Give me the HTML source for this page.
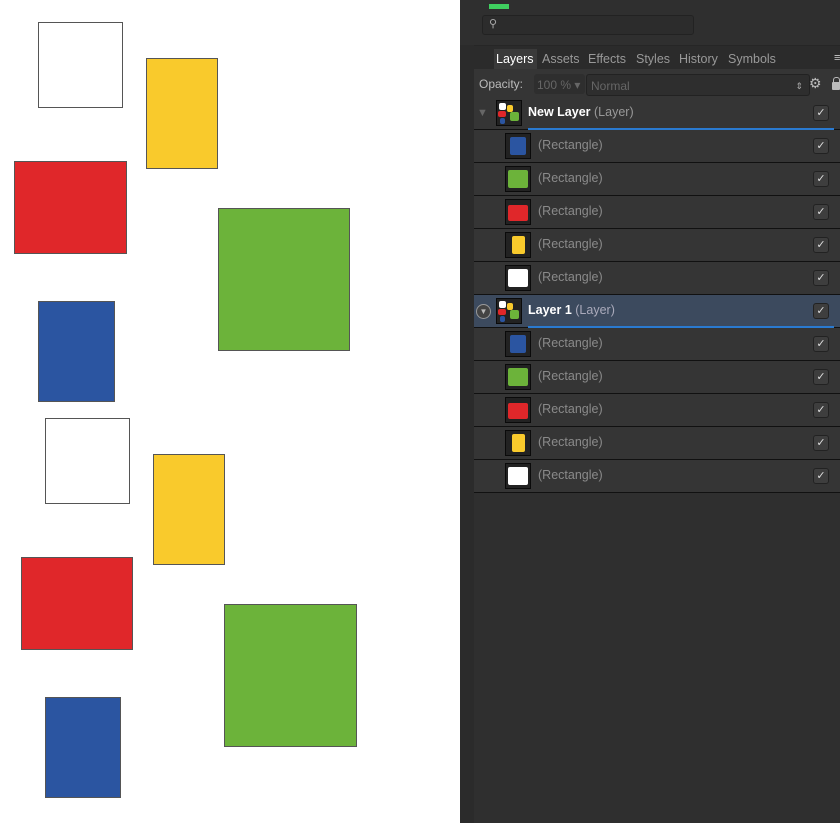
<!DOCTYPE html><html><head><style>
body{margin:0;width:840px;height:823px;background:#fff;position:relative;overflow:hidden;font-family:"Liberation Sans",sans-serif}
.s{position:absolute;box-sizing:border-box;border:1px solid #555}
.p{position:absolute;left:460px;top:0;width:380px;height:823px;background:#2f2f2f}
.row{position:absolute;left:474px;width:366px;height:32px;background:#353535;border-bottom:1px solid #111}
.th{position:absolute;top:3px;width:26px;height:26px;background:#222;box-sizing:border-box;border:1px solid #0a0a0a}
.th i{position:absolute;left:4px;top:3px;width:16px;height:18px;border-radius:2px}
.t{position:absolute;left:64px;top:8px;font-size:12.5px;color:#8a8a8a}
.cb{position:absolute;left:339px;top:8px;width:14px;height:14px;background:#3e3e3e;border:1px solid #222;border-radius:3px;color:#ddd;font-size:11px;line-height:14px;text-align:center}
.L{font-size:12.5px;color:#fff;font-weight:bold;position:absolute;left:54px;top:8px}
.L span{font-weight:normal;color:#999}
.tab{position:absolute;top:52px;font-size:12.5px;color:#999}
</style></head><body>
<div class="s" style="left:38px;top:22px;width:85px;height:86px;background:#fff"></div>
<div class="s" style="left:146px;top:58px;width:72px;height:111px;background:#f9ca2c"></div>
<div class="s" style="left:14px;top:161px;width:113px;height:93px;background:#e0272a"></div>
<div class="s" style="left:218px;top:208px;width:132px;height:143px;background:#6cb33a"></div>
<div class="s" style="left:38px;top:301px;width:77px;height:101px;background:#2b55a1"></div>
<div class="s" style="left:45px;top:418px;width:85px;height:86px;background:#fff"></div>
<div class="s" style="left:153px;top:454px;width:72px;height:111px;background:#f9ca2c"></div>
<div class="s" style="left:21px;top:557px;width:112px;height:93px;background:#e0272a"></div>
<div class="s" style="left:224px;top:604px;width:133px;height:143px;background:#6cb33a"></div>
<div class="s" style="left:45px;top:697px;width:76px;height:101px;background:#2b55a1"></div>
<div class="p">
<div style="position:absolute;left:29px;top:4px;width:20px;height:5px;background:#3fcf5f"></div>
<div style="position:absolute;left:22px;top:15px;width:210px;height:18px;border:1px solid #222;border-radius:3px;background:#2c2c2c"><span style="position:absolute;left:6px;top:1px;color:#aaa;font-size:11px">⚲</span></div>
<div style="position:absolute;left:14px;top:45px;width:366px;height:24px;background:#2b2b2b;border-top:1px solid #262626"></div>
<div style="position:absolute;left:34px;top:49px;width:43px;height:20px;background:#3a3a3a"></div>
<div class="tab" style="left:36px;color:#fff">Layers</div>
<div class="tab" style="left:82px">Assets</div>
<div class="tab" style="left:128px">Effects</div>
<div class="tab" style="left:176px">Styles</div>
<div class="tab" style="left:219px">History</div>
<div class="tab" style="left:268px">Symbols</div>
<div style="position:absolute;left:374px;top:52px;color:#ccc;font-size:11px">≡</div>
<div style="position:absolute;left:14px;top:69px;width:366px;height:28px;background:#353535;border-bottom:1px solid #111"></div>
<div style="position:absolute;left:19px;top:77px;font-size:12px;color:#bbb">Opacity:</div>
<div style="position:absolute;left:74px;top:74px;width:48px;height:20px;background:#2e2e2e;border-radius:3px;color:#666;font-size:12px;line-height:22px;padding-left:3px">100 % ▾</div>
<div style="position:absolute;left:126px;top:74px;width:218px;height:20px;background:#2e2e2e;border:1px solid #222;border-radius:3px;color:#666;font-size:12px;line-height:22px;padding-left:4px">Normal<span style="position:absolute;right:6px;top:0;color:#aaa;font-size:9px">⇕</span></div>
<div style="position:absolute;left:349px;top:75px;color:#bbb;font-size:14px">⚙</div>
<div style="position:absolute;left:372px;top:82px;width:8px;height:8px;background:#bbb;border-radius:1px"></div>
<div style="position:absolute;left:373px;top:77px;width:5px;height:6px;border:1px solid #bbb;border-bottom:none;border-radius:3px 3px 0 0"></div>
</div>
<div class="row" style="top:97px"><div style="position:absolute;left:3px;top:10px;color:#666;font-size:11px">▼</div>
<div class="th" style="left:22px"><i style="left:2px;top:2px;width:7px;height:7px;background:#fff"></i><i style="left:10px;top:4px;width:6px;height:7px;background:#f9ca2c"></i><i style="left:1px;top:10px;width:8px;height:6px;background:#e0272a"></i><i style="left:13px;top:11px;width:9px;height:9px;background:#6cb33a"></i><i style="left:3px;top:17px;width:5px;height:6px;background:#2b55a1"></i></div>
<div class="L">New Layer <span>(Layer)</span></div><div class="cb">✓</div>
<div style="position:absolute;left:54px;bottom:-1px;width:306px;height:2px;background:#2a7ad0"></div></div>
<div class="row" style="top:130px"><div class="th" style="left:31px"><i style="background:#2b55a1"></i></div><div class="t">(Rectangle)</div><div class="cb">✓</div></div>
<div class="row" style="top:163px"><div class="th" style="left:31px"><i style="background:#6cb33a;width:20px;left:2px"></i></div><div class="t">(Rectangle)</div><div class="cb">✓</div></div>
<div class="row" style="top:196px"><div class="th" style="left:31px"><i style="background:#e0272a;width:20px;left:2px;top:5px;height:16px"></i></div><div class="t">(Rectangle)</div><div class="cb">✓</div></div>
<div class="row" style="top:229px"><div class="th" style="left:31px"><i style="background:#f9ca2c;width:13px;left:6px"></i></div><div class="t">(Rectangle)</div><div class="cb">✓</div></div>
<div class="row" style="top:262px"><div class="th" style="left:31px"><i style="background:#fff;width:20px;left:2px"></i></div><div class="t">(Rectangle)</div><div class="cb">✓</div></div>
<div class="row" style="top:295px;background:#3c4a5e"><div style="position:absolute;left:2px;top:9px;width:13px;height:13px;border:1px solid #999;border-radius:50%;background:#444;color:#bbb;font-size:8px;line-height:13px;text-align:center">▼</div>
<div class="th" style="left:22px"><i style="left:2px;top:2px;width:7px;height:7px;background:#fff"></i><i style="left:10px;top:4px;width:6px;height:7px;background:#f9ca2c"></i><i style="left:1px;top:10px;width:8px;height:6px;background:#e0272a"></i><i style="left:13px;top:11px;width:9px;height:9px;background:#6cb33a"></i><i style="left:3px;top:17px;width:5px;height:6px;background:#2b55a1"></i></div>
<div class="L">Layer 1 <span style="color:#aab">(Layer)</span></div><div class="cb">✓</div>
<div style="position:absolute;left:54px;bottom:-1px;width:306px;height:2px;background:#2a7ad0"></div></div>
<div class="row" style="top:328px"><div class="th" style="left:31px"><i style="background:#2b55a1"></i></div><div class="t">(Rectangle)</div><div class="cb">✓</div></div>
<div class="row" style="top:361px"><div class="th" style="left:31px"><i style="background:#6cb33a;width:20px;left:2px"></i></div><div class="t">(Rectangle)</div><div class="cb">✓</div></div>
<div class="row" style="top:394px"><div class="th" style="left:31px"><i style="background:#e0272a;width:20px;left:2px;top:5px;height:16px"></i></div><div class="t">(Rectangle)</div><div class="cb">✓</div></div>
<div class="row" style="top:427px"><div class="th" style="left:31px"><i style="background:#f9ca2c;width:13px;left:6px"></i></div><div class="t">(Rectangle)</div><div class="cb">✓</div></div>
<div class="row" style="top:460px"><div class="th" style="left:31px"><i style="background:#fff;width:20px;left:2px"></i></div><div class="t">(Rectangle)</div><div class="cb">✓</div></div>
<div style="position:absolute;left:460px;top:45px;width:14px;height:778px;background:#2b2b2b"></div>
</body></html>
